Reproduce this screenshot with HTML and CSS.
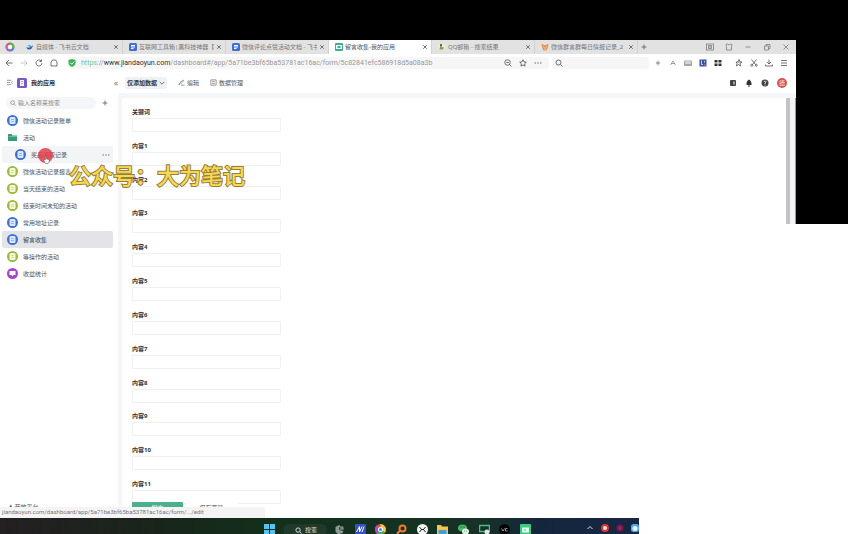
FILE: index.html
```html
<!DOCTYPE html>
<html lang="zh-CN">
<head>
    <meta charset="UTF-8">
    <meta name="viewport" content="width=device-width, initial-scale=1.0">
    <title>留言收集-我的应用</title>
    <link rel="stylesheet" href="styles.css">
</head>
<body>

    <!-- Icon shapes -->
    <svg class="icon-defs" aria-hidden="true">
        <symbol id="i-close" viewBox="0 0 10 10"><path d="M2 2l6 6M8 2l-6 6"/></symbol>
        <symbol id="i-plus" viewBox="0 0 10 10"><path d="M5 1v8M1 5h8"/></symbol>
        <symbol id="i-search" viewBox="0 0 16 16"><circle cx="7" cy="7" r="5"/><path d="M11 11l4 4"/></symbol>
        <symbol id="i-zoomout" viewBox="0 0 16 16"><circle cx="7" cy="7" r="5.5"/><path d="M11 11l4 4M4.500 7h5"/></symbol>
        <symbol id="i-star" viewBox="0 0 16 16"><path d="M8 1.500l2 4.300 4.600.6-3.400 3.200.9 4.700L8 12l-4.100 2.300.9-4.700L1.400 6.400 6 5.800z"/></symbol>
        <symbol id="i-doc" viewBox="0 0 22 22"><circle class="disc" cx="11" cy="11" r="11"/><rect class="sheet" x="5" y="4" width="12" height="14" rx="3"/><path class="line" d="M8.500 9h5M8.500 13h5"/></symbol>
        <symbol id="i-page" viewBox="0 0 16 16"><rect class="disc" width="16" height="16" rx="3"/><path class="paper" d="M4 4h8v2H4zM4 7h8v2H4zM4 10h5v2H4z"/></symbol>
    </svg>

    <div class="letterbox-top"></div>

    <div class="stage">
        <div class="browser">
            <!-- Tabs -->
            <div class="tab-bar">
                <svg class="brand" viewBox="0 0 20 20"><circle cx="10" cy="10" r="9" fill="#e9574c"/><path d="M10 10L10 1A9 9 0 0 1 18 14z" fill="#58b85c"/><path d="M10 10l8 4a9 9 0 0 1-13 3z" fill="#4f87e8"/><path d="M10 10L5 17A9 9 0 0 1 2 6z" fill="#bb65ce"/><circle cx="10" cy="10" r="4.500" fill="#fff"/></svg>
                <div class="tab">
                    <svg class="favicon" viewBox="0 0 16 16"><path d="M1 8c4 3 8 1 13-4-1 6-4 9-8 9-3 0-5-2-5-5z" fill="#2b55b8"/><path d="M3 4h6l2 4-4 1z" fill="#48b9d4"/></svg>
                    <span>自媒体 · 飞书云文档</span>
                    <button aria-label="关闭"><svg class="line-icon"><use href="#i-close"/></svg></button>
                </div>
                <div class="tab">
                    <svg class="favicon blue"><use href="#i-page"/></svg>
                    <span>互联网工具箱|黑科技神器【</span>
                    <button aria-label="关闭"><svg class="line-icon"><use href="#i-close"/></svg></button>
                </div>
                <div class="tab">
                    <svg class="favicon blue"><use href="#i-page"/></svg>
                    <span>微信评论点赞活动文档 - 飞书</span>
                    <button aria-label="关闭"><svg class="line-icon"><use href="#i-close"/></svg></button>
                </div>
                <div class="tab active">
                    <svg class="favicon" viewBox="0 0 16 16"><rect width="16" height="16" rx="2" fill="#3fae8c"/><path d="M2 4h12v8H2z" fill="#eafff6"/><path d="M5 6h5l2 2-2 2H5z" fill="#3fae8c"/></svg>
                    <span>留言收集-我的应用</span>
                    <button aria-label="关闭"><svg class="line-icon"><use href="#i-close"/></svg></button>
                </div>
                <div class="tab">
                    <svg class="favicon" viewBox="0 0 16 16"><circle cx="8" cy="8" r="7" fill="#f1edc8"/><path d="M5 2l3 2-1 4 5 1-2 4H3z" fill="#7fa05a"/><circle cx="6" cy="4" r="2" fill="#474747"/></svg>
                    <span>QQ邮箱 - 搜索结果</span>
                    <button aria-label="关闭"><svg class="line-icon"><use href="#i-close"/></svg></button>
                </div>
                <div class="tab">
                    <svg class="favicon" viewBox="0 0 16 16"><path d="M1 1l5 3h4l5-3-1 7-3 7H5L2 8z" fill="#ee914a"/><path d="M4 7l3 2M12 7L9 9M6 12h4" stroke="#fff" fill="none"/></svg>
                    <span>微信群言群每日情报记录_2</span>
                    <button aria-label="关闭"><svg class="line-icon"><use href="#i-close"/></svg></button>
                </div>
                <button class="new-tab" aria-label="新标签页"><svg class="line-icon"><use href="#i-plus"/></svg></button>
                <div class="window-buttons">
                    <svg viewBox="0 0 16 16"><rect x="1" y="2" width="14" height="12"/><path d="M5 5h6v6H5zM8 5v6"/></svg>
                    <svg viewBox="0 0 16 16"><path d="M2 3l3-1 3 2 3-2 3 1-1 4v7H3V7z"/></svg>
                    <svg viewBox="0 0 16 16"><path d="M3 8h10"/></svg>
                    <svg viewBox="0 0 16 16"><path d="M3 6h8v8H3zM6 6V3h8v8h-3"/></svg>
                    <svg viewBox="0 0 16 16"><path d="M3 3l10 10M13 3L3 13"/></svg>
                </div>
            </div>

            <!-- Address bar -->
            <div class="nav-bar">
                <div class="nav-buttons">
                    <svg viewBox="0 0 16 16"><path d="M15 8H2M8 2L2 8l6 6"/></svg>
                    <svg class="off" viewBox="0 0 16 16"><path d="M1 8h13M8 2l6 6-6 6"/></svg>
                    <svg viewBox="0 0 16 16"><path d="M14 8a6 6 0 1 1-2-4.500M13 1v4H9"/></svg>
                    <svg viewBox="0 0 16 16"><path d="M2 14V6l3-4h6l3 4v8z"/></svg>
                </div>
                <div class="address">
                    <svg class="shield" viewBox="0 0 16 16"><path d="M8 0l7 2v6c0 4-3 6-7 8-4-2-7-4-7-8V2z" fill="#3cb558"/><path d="M4.500 7.500l3 3 4.500-5" stroke="#fff" stroke-width="2" fill="none"/></svg>
                    <div class="url"><span class="scheme">https</span>://<b>www.jiandaoyun.com</b>/dashboard#/app/5a71be3bf65ba53781ac16ac/form/5c82841efc586918d5a08a3b</div>
                    <div class="address-tools">
                        <svg><use href="#i-zoomout"/></svg>
                        <svg><use href="#i-star"/></svg>
                        <svg viewBox="0 0 16 16"><path d="M1 8h3M6.500 8h3M12 8h3"/></svg>
                    </div>
                </div>
                <label class="web-search">
                    <svg><use href="#i-search"/></svg>
                    <input type="text" aria-label="搜索">
                </label>
                <div class="extensions">
                    <svg class="dim" viewBox="0 0 16 16"><path d="M8 3v10M4 6l8 4M12 6l-8 4"/></svg>
                    <svg class="dim" viewBox="0 0 16 16"><path d="M8 4l-5 8M8 4l5 8M4 9h8"/></svg>
                    <svg class="dim" viewBox="0 0 16 16"><path d="M1 4h14v9H1zM1 8h14M1 11h14"/></svg>
                    <svg viewBox="0 0 16 16"><rect x="1" y="1" width="14" height="14" fill="#3c4f9e" stroke="none"/><path d="M5 3v8h3M11 4v3M12 11v2" stroke="#fff"/></svg>
                    <svg viewBox="0 0 16 16"><path d="M1 2h6v5H1zM9 2h6v5H9zM1 9h6v5H1zM9 9h6v5H9z" fill="#333" stroke="none"/></svg>
                </div>
                <div class="extensions tools">
                    <svg viewBox="0 0 16 16"><path d="M2 6h12l-4 3 1 5-4-3-4 3 1-5zM6 5l2-4 2 4"/></svg>
                    <svg viewBox="0 0 16 16"><path d="M3 1l8 10M13 1L5 11"/><circle cx="3.500" cy="12.500" r="2"/><circle cx="12.500" cy="12.500" r="2"/></svg>
                    <svg viewBox="0 0 16 16"><path d="M8 1v9M4 6l4 4 4-4M1 11v3h14v-3"/></svg>
                    <svg viewBox="0 0 16 16"><path d="M2 3h12M2 8h12M2 13h12"/></svg>
                </div>
            </div>

            <!-- Application -->
            <div class="app">
                <aside class="sidebar">
                    <div class="app-title">
                        <svg class="menu" viewBox="0 0 16 16"><path d="M2 3h10M2 8h7M2 13h10M15 5l-3 3 3 3"/></svg>
                        <svg class="app-logo" viewBox="0 0 20 20"><rect width="20" height="20" rx="3" fill="#775ac2"/><path d="M6 4h8v12H6z" fill="#f5f0ff"/><path d="M8 7h4M8 11h4" stroke="#775ac2"/></svg>
                        <h1>我的应用</h1>
                        <button class="collapse" aria-label="收起">«</button>
                    </div>
                    <div class="side-search">
                        <label>
                            <svg><use href="#i-search"/></svg>
                            <input type="text" placeholder="输入名称来搜索" aria-label="搜索表单">
                        </label>
                        <button aria-label="新建"><svg class="line-icon"><use href="#i-plus"/></svg></button>
                    </div>
                    <nav class="form-list">
                        <a href="#"><svg class="blue"><use href="#i-doc"/></svg>微信活动记录账单</a>
                        <a href="#"><svg viewBox="0 0 22 22"><path d="M2 4h7l2 3h9v11H2z" fill="#379b79"/><path d="M3 9h17" stroke="#a5dcc8"/></svg>活动</a>
                        <a href="#" class="child hover"><svg class="blue"><use href="#i-doc"/></svg>奖品领取记录<svg class="more" viewBox="0 0 16 16"><path d="M1 7h3v2H1zM6.500 7h3v2h-3zM12 7h3v2h-3z"/></svg></a>
                        <a href="#"><svg class="green"><use href="#i-doc"/></svg>微信活动记录报表</a>
                        <a href="#"><svg class="green"><use href="#i-doc"/></svg>当天结束的活动</a>
                        <a href="#"><svg class="green"><use href="#i-doc"/></svg>结束时间未知的活动</a>
                        <a href="#"><svg class="blue"><use href="#i-doc"/></svg>常用地址记录</a>
                        <a href="#" class="current"><svg class="blue"><use href="#i-doc"/></svg>留言收集</a>
                        <a href="#"><svg class="green"><use href="#i-doc"/></svg>等操作的活动</a>
                        <a href="#"><svg viewBox="0 0 22 22"><circle cx="11" cy="11" r="11" fill="#a844ca"/><path d="M5 6h12v8h-4l-2 3-2-3H5z" fill="#fff"/></svg>收益统计</a>
                    </nav>
                    <div class="side-footer">♟ 开放平台</div>
                </aside>

                <main class="content">
                    <header class="toolbar">
                        <button class="mode">仅添加数据 <svg viewBox="0 0 10 10"><path d="M1 3l4 4 4-4"/></svg></button>
                        <button><svg viewBox="0 0 16 16"><path d="M3 11l8-9 2 2-8 8-3 1zM7 14h8"/></svg>编辑</button>
                        <button><svg viewBox="0 0 16 16"><path d="M2 2h12v12H2zM5 6h6M5 10h6"/></svg>数据管理</button>
                        <div class="user-tools">
                            <svg viewBox="0 0 16 16"><rect x="2" y="2" width="12" height="12" rx="2" fill="#444"/><path d="M10 5v6" stroke="#fff" stroke-width="2"/></svg>
                            <svg viewBox="0 0 16 16"><path d="M8 1c3 2 5 5 5 8v3H3V9c0-3 2-6 5-8zM6 13h4v2H6z" fill="#333"/></svg>
                            <svg viewBox="0 0 16 16"><circle cx="8" cy="8" r="7" fill="#444"/><path d="M6 6c0-3 5-2 4 0l-2 2v2M8 11v2" stroke="#fff" stroke-width="1.500" fill="none"/></svg>
                            <span class="avatar">德</span>
                        </div>
                    </header>
                    <div class="card-row">
                        <form class="card">
                            <div class="field"><label for="f0">关键词</label><input id="f0" type="text"></div>
                            <div class="field"><label for="f1">内容1</label><input id="f1" type="text"></div>
                            <div class="field"><label for="f2">内容2</label><input id="f2" type="text"></div>
                            <div class="field"><label for="f3">内容3</label><input id="f3" type="text"></div>
                            <div class="field"><label for="f4">内容4</label><input id="f4" type="text"></div>
                            <div class="field"><label for="f5">内容5</label><input id="f5" type="text"></div>
                            <div class="field"><label for="f6">内容6</label><input id="f6" type="text"></div>
                            <div class="field"><label for="f7">内容7</label><input id="f7" type="text"></div>
                            <div class="field"><label for="f8">内容8</label><input id="f8" type="text"></div>
                            <div class="field"><label for="f9">内容9</label><input id="f9" type="text"></div>
                            <div class="field"><label for="f10">内容10</label><input id="f10" type="text"></div>
                            <div class="field"><label for="f11">内容11</label><input id="f11" type="text"></div>
                            <div class="form-actions">
                                <button type="button" class="submit">提交</button>
                                <button type="button" class="draft">保存草稿</button>
                            </div>
                        </form>
                        <div class="scroll-strip"></div>
                    </div>
                </main>
            </div>

            <div class="status-bar">jiandaoyun.com/dashboard/app/5a71be3bf65ba53781ac16ac/form/.../edit</div>
        </div>
        <div class="letterbox-side"></div>
    </div>

    <!-- Taskbar -->
    <footer class="taskbar">
        <svg class="start" viewBox="0 0 22 22"><path d="M0 0h10v10H0zM12 0h10v10H12zM0 12h10v10H0zM12 12h10v10H12z" fill="#54c5f2"/></svg>
        <label class="task-search">
            <svg><use href="#i-search"/></svg>
            <input type="text" placeholder="搜索" aria-label="搜索">
        </label>
        <div class="task-apps">
            <svg viewBox="0 0 22 22"><path d="M3 6l7-4 4 3-4 2 1 5 8 2-2 4-9 3-5-6z" fill="#8c9996"/><path d="M12 6l6-2 2 7-7 1z" fill="#7d8a87"/></svg>
            <svg viewBox="0 0 22 22"><rect width="22" height="22" rx="2" fill="#3450c4"/><path d="M3 16L9 5v11l5-11M14 16l4-11" stroke="#fff" stroke-width="2" fill="none"/></svg>
            <svg viewBox="0 0 22 22"><circle cx="11" cy="11" r="11" fill="#e6493f"/><path d="M11 11V0a11 11 0 0 1 9 17z" fill="#f2ca3f"/><path d="M11 11l9 6a11 11 0 0 1-16 2z" fill="#46ad62"/><path d="M11 11l-7 8A11 11 0 0 1 3 3z" fill="#a652cd"/><circle cx="11" cy="11" r="5" fill="#fff"/><circle cx="11" cy="11" r="3" fill="#3c8bea"/></svg>
            <svg viewBox="0 0 22 22"><circle cx="13" cy="9" r="6" fill="none" stroke="#ec7a2b" stroke-width="4"/><path d="M8 13l-6 7" stroke="#ec7a2b" stroke-width="4"/></svg>
            <svg viewBox="0 0 22 22"><circle cx="11" cy="11" r="11" fill="#f5f5f5"/><path d="M5 6l4 5-4 5M17 6l-4 5 4 5M8 11h6" stroke="#222" stroke-width="2" fill="none"/></svg>
            <svg viewBox="0 0 22 22"><path d="M0 2h8l2 3h12v16H0z" fill="#f4c64d"/><path d="M3 12h16v9H3z" fill="#469bdd"/></svg>
            <svg viewBox="0 0 22 22"><ellipse cx="9" cy="8" rx="9" ry="7" fill="#43b866"/><ellipse cx="15" cy="15" rx="7" ry="6" fill="#dff3e2"/><path d="M5 6h2M11 6h2M12 14h1M17 14h1" stroke="#234" stroke-width="2"/></svg>
            <svg viewBox="0 0 22 22"><path d="M1 3h20v12H1z" fill="none" stroke="#51b98a" stroke-width="3"/><circle cx="16" cy="16" r="5" fill="#dce9e4"/></svg>
            <svg viewBox="0 0 22 22"><circle cx="11" cy="11" r="11" fill="#050505"/><path d="M5 9l3 5 3-5M17 9h-4v5h4" stroke="#bbb" stroke-width="1.500" fill="none"/></svg>
            <svg viewBox="0 0 22 22"><rect width="22" height="22" rx="2" fill="#3ecb80"/><path d="M4 7h14v10H4z" fill="#e1fff0"/><path d="M9 10l4 2-4 2z" fill="#3ecb80"/></svg>
        </div>
        <div class="tray">
            <svg viewBox="0 0 16 16"><path d="M3 10l5-5 5 5" stroke="#ddd" stroke-width="2" fill="none"/></svg>
            <svg viewBox="0 0 16 16"><circle cx="8" cy="8" r="8" fill="#dd3438"/><circle cx="8" cy="8" r="4" fill="#ffe1dc"/></svg>
            <svg viewBox="0 0 16 16"><circle cx="8" cy="8" r="7" fill="#7a174f"/><circle cx="8" cy="8" r="3" fill="#a32763"/></svg>
            <svg viewBox="0 0 16 16"><rect width="16" height="16" rx="5" fill="#50a9e5"/><circle cx="8" cy="9" r="5" fill="#e7f4ff"/></svg>
        </div>
    </footer>

    <!-- Floating overlays -->
    <div class="click-mark">
        <svg viewBox="0 0 14 16"><path d="M4 15L1 9l2-1 1 1V2h2v5l5 1v4l-2 3z" fill="#fff" stroke="#7d3b42"/></svg>
    </div>
    <div class="watermark">公众号：大为笔记</div>

</body>
</html>
```
FILE: styles.css
```css
/* General Styles */
* {
    box-sizing: border-box;
}

body {
    margin: 0;
    height: 100vh;
    display: flex;
    flex-direction: column;
    position: relative;
    overflow: hidden;
    background: #fff;
    color: #555;
    font-family: "Noto Sans", "Noto Sans CJK SC", sans-serif;
    font-size: 6px;
    line-height: 10px;
}

svg {
    display: block;
    flex: none;
    width: 8px;
    height: 8px;
}

button,
input {
    font: inherit;
    color: inherit;
    background: none;
    border: none;
    padding: 0;
    margin: 0;
    min-width: 0;
    outline: none;
}

.icon-defs {
    position: absolute;
    width: 0;
    height: 0;
}

.blue {
    --tone: #3f6fd0;
    --sheet: #dce8ff;
}

.green {
    --tone: #9cbb3c;
    --sheet: #f5fadf;
}

.disc {
    fill: var(--tone);
}

.sheet {
    fill: var(--sheet);
}

.line {
    stroke: var(--tone);
    stroke-width: 1;
}

.paper {
    fill: #fff;
}

.line-icon {
    width: 6px;
    height: 6px;
    stroke: #666;
    stroke-width: 1.5;
    fill: none;
}

/* Black bars around the window */
.letterbox-top {
    height: 40px;
    flex: none;
    background: #000;
}

.stage {
    flex: 1;
    min-height: 0;
    display: flex;
    align-items: flex-start;
}

.letterbox-side {
    width: 52px;
    height: 184px;
    background: #000;
}

.browser {
    flex: 1;
    min-width: 0;
    height: 100%;
    display: flex;
    flex-direction: column;
    position: relative;
}

/* Tabs */
.tab-bar {
    height: 14px;
    flex: none;
    display: flex;
    align-items: center;
    background: #e2e2e2;
}

.brand {
    width: 10px;
    height: 10px;
    margin: 0 5px;
}

.tab {
    flex: 0 1 103px;
    min-width: 0;
    height: 14px;
    display: flex;
    align-items: center;
    gap: 2px;
    padding: 0 3px 0 6px;
    border-right: 1px solid #d2d2d2;
    color: #777;
}

.tab.active {
    background: #fff;
    color: #555;
}

.tab span {
    flex: 1;
    overflow: hidden;
    white-space: nowrap;
}

.favicon {
    width: 8px;
    height: 8px;
}

.new-tab {
    padding: 0 3px;
}

.window-buttons {
    margin-left: auto;
    padding-right: 6px;
    display: flex;
    gap: 11px;
    stroke: #777;
    stroke-width: 1.5;
    fill: none;
}

/* Address bar */
.nav-bar {
    height: 18px;
    flex: none;
    display: flex;
    align-items: center;
    gap: 3px;
    padding-right: 8px;
    background: #fff;
    stroke-width: 1.5;
    stroke: #444;
    fill: none;
}

.nav-buttons {
    display: flex;
    gap: 7px;
    padding: 0 7px 0 5px;
}

.nav-buttons .off {
    stroke: #bbb;
}

.address {
    flex: 1;
    min-width: 0;
    height: 12px;
    display: flex;
    align-items: center;
    gap: 5px;
    padding-right: 7px;
    border-radius: 3px;
    background: #f6f6f6;
}

.shield {
    stroke: none;
}

.url {
    flex: 1;
    min-width: 0;
    overflow: hidden;
    white-space: nowrap;
    font-family: Roboto, sans-serif;
    font-size: 7px;
    color: #999;
}

.url b {
    font-weight: 400;
    color: #333;
}

.scheme {
    color: #79c488;
}

.address-tools {
    display: flex;
    gap: 7px;
}

.web-search {
    flex: none;
    width: 97px;
    height: 12px;
    display: flex;
    align-items: center;
    padding-left: 3px;
    border-radius: 3px;
    background: #f6f6f6;
}

.web-search input {
    flex: 1;
}

.extensions {
    display: flex;
    gap: 7px;
    padding-left: 2px;
}

.extensions .dim {
    stroke: #888;
}

.extensions.tools {
    padding-left: 10px;
}

/* Application */
.app {
    flex: 1;
    min-height: 0;
    display: flex;
}

.sidebar {
    width: 118px;
    flex: none;
    display: flex;
    flex-direction: column;
    background: #fff;
}

.app-title {
    height: 21px;
    display: flex;
    align-items: center;
    gap: 4px;
    padding: 0 0 0 6px;
}

.app-title .menu {
    width: 7px;
    height: 7px;
    stroke: #666;
    stroke-width: 1.5;
    fill: none;
}

.app-title .app-logo {
    width: 10px;
    height: 10px;
}

.app-title h1 {
    flex: 1;
    margin: 0;
    font-size: 6px;
    color: #333;
}

.collapse {
    font-size: 8px;
    color: #777;
}

.side-search {
    height: 19px;
    display: flex;
    align-items: center;
    gap: 6px;
    padding-left: 6px;
}

.side-search label {
    width: 90px;
    height: 12px;
    display: flex;
    align-items: center;
    gap: 2px;
    padding-left: 4px;
    border-radius: 6px;
    background: #f5f6f8;
}

.side-search label svg {
    width: 6px;
    height: 6px;
    stroke: #666;
    stroke-width: 1.5;
    fill: none;
}

.side-search input {
    flex: 1;
}

.side-search input::placeholder {
    color: #888;
}

.form-list a {
    height: 17px;
    display: flex;
    align-items: center;
    gap: 5px;
    margin: 0 5px 0 2px;
    padding-left: 5px;
    border-radius: 2px;
    color: #555;
    text-decoration: none;
}

.form-list svg {
    width: 11px;
    height: 11px;
}

.form-list .child {
    padding-left: 13px;
}

.form-list .hover {
    background: #f3f4f6;
}

.form-list .current {
    background: #e3e4e8;
    color: #444;
}

.form-list .more {
    width: 8px;
    height: 8px;
    margin-left: auto;
    margin-right: 3px;
    fill: #777;
}

.side-footer {
    height: 16px;
    margin-top: auto;
    padding-left: 8px;
}

.content {
    flex: 1;
    min-width: 0;
    display: flex;
    flex-direction: column;
}

.toolbar {
    height: 21px;
    flex: none;
    display: flex;
    align-items: center;
    gap: 11px;
    padding: 0 9px 0 7px;
}

.toolbar button {
    display: flex;
    align-items: center;
    gap: 2px;
}

.toolbar button svg {
    width: 7px;
    height: 7px;
    stroke: #666;
    stroke-width: 1.5;
    fill: none;
}

.toolbar .mode {
    height: 12px;
    padding: 0 2px;
    border-radius: 2px;
    background: #f0f1f3;
    color: #333;
    font-weight: 700;
}

.toolbar .mode svg {
    width: 6px;
    height: 6px;
}

.user-tools {
    margin-left: auto;
    display: flex;
    align-items: center;
    gap: 8px;
}

.avatar {
    width: 10px;
    height: 10px;
    border-radius: 50%;
    background: #d65353;
    color: #fff;
    text-align: center;
}

.card-row {
    flex: 1;
    min-height: 0;
    display: flex;
    align-items: flex-start;
    border-left: 4px solid #f5f6f8;
    border-top: 5px solid #f5f6f8;
}

/* Form */
.card {
    flex: 1;
    height: 100%;
    display: flex;
    flex-direction: column;
    position: relative;
    padding: 9px 10px 5px;
    background: #fff;
}

.field {
    flex: 1;
    min-height: 0;
    display: flex;
    flex-direction: column;
    gap: 1px;
}

.field label {
    font-weight: 700;
    color: #333;
}

.field input {
    width: 149px;
    height: 14px;
    border: 1px solid #f0f0f1;
    border-radius: 1px;
}

/* Footer stays over the last field */
.form-actions {
    position: absolute;
    left: 10px;
    bottom: 10px;
    height: 6px;
    display: flex;
    gap: 3px;
    overflow: hidden;
}

.form-actions button {
    width: 51px;
    height: 12px;
    border-radius: 1px;
    background: #fff;
}

.form-actions .submit {
    background: #4cb08c;
    color: #fff;
}

.scroll-strip {
    width: 10px;
    height: 126px;
    border-left: 4px solid #c2c3c6;
    border-right: 1px solid #999;
    background: #f3f3f5;
}

.status-bar {
    position: absolute;
    left: 0;
    bottom: 0;
    width: 265px;
    height: 11px;
    padding-left: 2px;
    border-radius: 0 2px 0 0;
    background: #f4f4f4;
    color: #777;
    font-family: Roboto, sans-serif;
    white-space: nowrap;
}

/* Taskbar */
.taskbar {
    width: 75.4%;
    height: 16px;
    flex: none;
    display: flex;
    align-items: flex-start;
    padding: 6px 0 0 264px;
    overflow: hidden;
    background: linear-gradient(90deg, #241f21 0%, #19251b 25%, #12301b 42%, #173226 75%, #14263d 84%, #182644 100%);
}

.taskbar .start {
    width: 11px;
    height: 11px;
}

.task-search {
    width: 44px;
    height: 12px;
    flex: none;
    display: flex;
    align-items: center;
    gap: 3px;
    margin: 0 7px 0 8px;
    padding-left: 12px;
    border-radius: 6px;
    background: #20392a;
    color: #ddd;
}

.task-search svg {
    width: 7px;
    height: 7px;
    stroke: #eee;
    stroke-width: 2;
    fill: none;
}

.task-search input {
    flex: 1;
}

.task-search input::placeholder {
    color: #ddd;
}

.task-apps {
    width: 197px;
    flex: none;
    display: flex;
    justify-content: space-between;
}

.task-apps svg {
    width: 11px;
    height: 11px;
}

.tray {
    flex: 1;
    min-width: 0;
    display: flex;
    justify-content: flex-end;
    gap: 7px;
}

/* Overlays */
.click-mark {
    position: absolute;
    left: 38px;
    top: 148px;
    width: 15px;
    height: 15px;
    border-radius: 50%;
    background: rgba(226, 62, 74, 0.85);
}

.click-mark svg {
    width: 8px;
    height: 9px;
    margin: 7px 0 0 5px;
}

.watermark {
    position: absolute;
    left: 69px;
    top: 160px;
    font-family: "Noto Sans CJK SC", sans-serif;
    font-size: 22px;
    line-height: 28px;
    font-weight: 500;
    color: #f8d84f;
    -webkit-text-stroke: 2px #97803f;
    paint-order: stroke fill;
    white-space: nowrap;
}
```
